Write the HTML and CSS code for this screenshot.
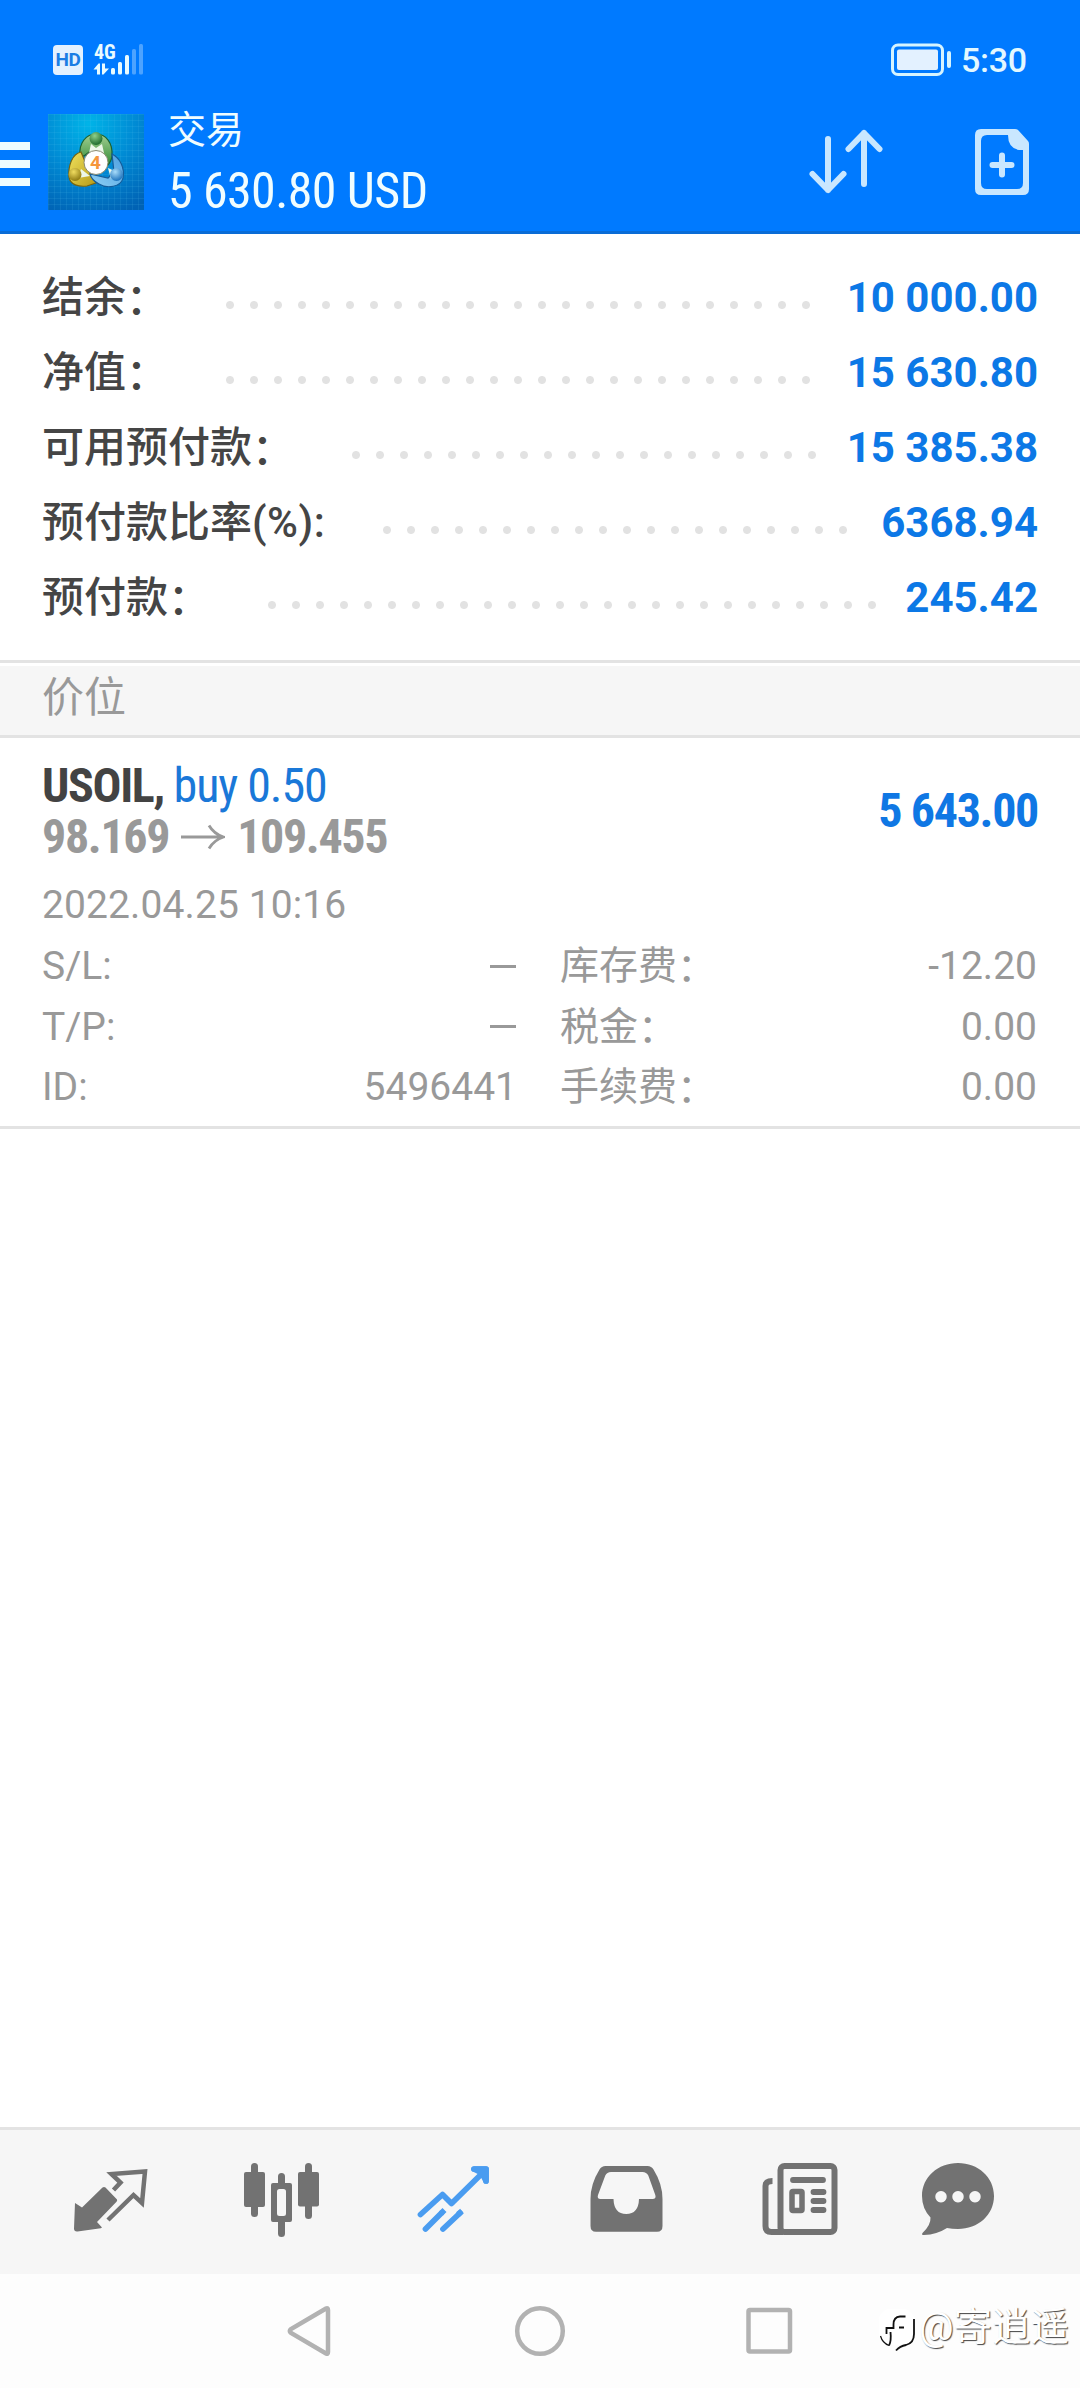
FILE: index.html
```html
<!DOCTYPE html>
<html lang="zh-CN">
<head>
<meta charset="utf-8">
<title>交易</title>
<link rel="stylesheet" href="styles.css">
</head>
<body>
<div class="app">
  <header class="header">
    <div class="status">
      <div class="status-left">
        <span class="hd">HD</span>
        <div class="signal">
          <span class="net cond">4G</span>
          <svg width="52" height="34" viewBox="93 43 52 34">
            <path d="M93.500 69.500l5-6h1.500v11h-3v-5zM102 63.500h3v5h4l-5.500 6H102z" fill="#e9fbff"/>
            <rect x="111" y="68" width="4" height="6.500" rx="1.500" fill="#e9fbff"/>
            <rect x="118" y="62" width="4" height="12.500" rx="1.500" fill="#e9fbff"/>
            <rect x="125" y="55" width="4" height="19.500" rx="1.500" fill="#e9fbff"/>
            <rect x="132" y="49" width="4" height="25.500" rx="1.500" fill="#4da3ff"/>
            <rect x="139" y="44" width="4" height="30.500" rx="1.500" fill="#4da3ff"/>
          </svg>
        </div>
      </div>
      <div class="status-right">
        <svg width="62" height="34" viewBox="891 43 62 34">
          <rect x="893.500" y="45" width="50" height="29.500" rx="5.500" fill="none" stroke="#d6f4ff" stroke-width="3"/>
          <rect x="898" y="49.500" width="41" height="20.500" rx="2" fill="#e3f1ff"/>
          <rect x="948" y="51" width="4" height="17" rx="2" fill="#d6f4ff"/>
        </svg>
        <span class="clock">5:30</span>
      </div>
    </div>
    <div class="toolbar">
      <svg class="menu" width="30" height="44" viewBox="0 0 30 44"><path d="M0 0h30v8H0zM0 18h30v8H0zM0 36h30v8H0z" fill="#eefcff"/></svg>
      <svg class="logo" width="96" height="96" viewBox="0 0 96 96">
        <defs>
          <radialGradient id="bg" cx=".42" cy=".1" r="1"><stop offset="0" stop-color="#00b4e8"/><stop offset=".5" stop-color="#008ad4"/><stop offset="1" stop-color="#0062b4"/></radialGradient>
          <linearGradient id="green" x2="0" y2="1"><stop offset="0" stop-color="#a4cf92"/><stop offset="1" stop-color="#2f8a34"/></linearGradient>
          <linearGradient id="yellow" x2="1" y2="1"><stop offset="0" stop-color="#f2e35e"/><stop offset="1" stop-color="#b59a18"/></linearGradient>
          <linearGradient id="blue" x1="1" y1="0" x2="0" y2="1"><stop offset="0" stop-color="#4c9fe0"/><stop offset="1" stop-color="#8fd0f4"/></linearGradient>
          <radialGradient id="gball" cx=".4" cy=".3" r=".7"><stop offset="0" stop-color="#8fd08b"/><stop offset="1" stop-color="#1f6b2c"/></radialGradient>
          <radialGradient id="yball" cx=".4" cy=".3" r=".7"><stop offset="0" stop-color="#f0dc60"/><stop offset="1" stop-color="#8f7a12"/></radialGradient>
          <radialGradient id="bball" cx=".4" cy=".3" r=".7"><stop offset="0" stop-color="#a8dcfa"/><stop offset="1" stop-color="#1f74bd"/></radialGradient>
          <pattern id="grid" width="6" height="6" patternUnits="userSpaceOnUse"><path d="M0 .5h6M.5 0v6" stroke="#5cc8f0" stroke-opacity=".12" stroke-width="1"/></pattern>
        </defs>
        <rect width="96" height="96" fill="url(#bg)"/>
        <rect width="96" height="96" fill="url(#grid)"/>
        <path d="M32 41C31 29 38 20 48 20s17 9 16 22c-.500 4-3 8-5 10L49 35l-4 0-9 7z" fill="url(#green)" stroke="#1d6230" stroke-width="1.200"/>
        <path d="M33 38c-9 2-13 14-12 25 1 8 10 10 18 9l9-3-7-12z" fill="url(#yellow)" stroke="#776410" stroke-width="1.200"/>
        <path d="M64 40c8 4 13 14 11 24-2 9-16 11-24 6-4-2-8-6-9-10l18 4 6-6z" fill="url(#blue)" stroke="#155d9a" stroke-width="1.200"/>
        <path d="M43 30l5 4 6-4 2 9H41zM33 55l-3 9 12-2zM60 54l9 4-6 7z" fill="#edf7e9"/>
        <circle cx="48" cy="48.500" r="12" fill="#fff" stroke="#8a8a70" stroke-width="1"/>
        <circle cx="48" cy="24.500" r="6.500" fill="url(#gball)"/>
        <circle cx="27" cy="60.500" r="6.500" fill="url(#yball)"/>
        <circle cx="68.500" cy="60.500" r="6.500" fill="url(#bball)"/>
        <text x="47.500" y="55" class="logo-num" text-anchor="middle">4</text>
      </svg>
      <div class="titles">
        <div class="title">交易</div>
        <div class="sum cond">5 630.80 USD</div>
      </div>
      <svg class="sort" width="74" height="66" viewBox="809 129 74 66" fill="none" stroke="#c9e7ff" stroke-width="6" stroke-linecap="round" stroke-linejoin="round">
        <path d="M828 139v51M812.500 174l15.500 16 15.500-16M864 184v-51M848.500 149l15.500-16 15.500 16"/>
      </svg>
      <svg class="add" width="54" height="66" viewBox="975 129 54 66">
        <path fill-rule="evenodd" fill="#c9e7ff" d="M981 129h34q2 0 3.500 1.500L1028 141q1 1 1 3v45q0 6-6 6h-42q-6 0-6-6v-54q0-6 6-6zM987 135q-6 0-6 6v42q0 6 6 6h30q6 0 6-6v-33h-4q-11-2-11-15z"/>
        <path d="M992.500 165h19M1002 155.500v19" stroke="#c9e7ff" stroke-width="6" stroke-linecap="round"/>
      </svg>
    </div>
  </header>

  <section class="account">
    <div class="row"><span class="label">结余<span class="colon">：</span></span><i class="dots"></i><span class="value">10 000.00</span></div>
    <div class="row"><span class="label">净值<span class="colon">：</span></span><i class="dots"></i><span class="value">15 630.80</span></div>
    <div class="row"><span class="label">可用预付款<span class="colon">：</span></span><i class="dots"></i><span class="value">15 385.38</span></div>
    <div class="row"><span class="label">预付款比率<span class="unit">(%):</span></span><i class="dots"></i><span class="value">6368.94</span></div>
    <div class="row"><span class="label">预付款<span class="colon">：</span></span><i class="dots"></i><span class="value">245.42</span></div>
  </section>

  <h2 class="section-title">价位</h2>

  <section class="position">
    <div class="deal">
      <div class="deal-main">
        <div class="deal-line cond"><b class="symbol">USOIL,</b> <span class="side">buy 0.50</span></div>
        <div class="deal-line cond prices"><b>98.169</b><svg class="arrow" width="44" height="26" viewBox="0 0 44 26" fill="none" stroke="#999" stroke-width="2.800"><path d="M0 13h42M28 1.500Q33 10 42.500 13Q33 16 28 24.500"/></svg><b>109.455</b></div>
      </div>
      <b class="profit cond">5 643.00</b>
    </div>
    <div class="date">2022.04.25 10:16</div>
    <div class="details">
      <div class="cell"><span>S/L:</span><i class="dash"></i></div>
      <div class="cell"><span>库存费<span class="colon">：</span></span><span>-12.20</span></div>
      <div class="cell"><span>T/P:</span><i class="dash"></i></div>
      <div class="cell"><span>税金<span class="colon">：</span></span><span>0.00</span></div>
      <div class="cell"><span>ID:</span><span class="ticket">5496441</span></div>
      <div class="cell"><span>手续费<span class="colon">：</span></span><span>0.00</span></div>
    </div>
  </section>

  <nav class="tabs">
    <svg width="180" height="144" viewBox="20 2130 180 144" fill="#727272">
      <path d="M75 2203l7 4.500 20.500-20q1.500-1 3 0l11.500 12q.500 1.200-.500 2.200L97 2222l5 5.500q-1 1-3 1l-21.500 3q-3.500.300-3.500-3z"/>
      <path d="M113.500 2190l7-7.500-9-8.500 33.500-2.500-3 31.500-8.500-8L108 2220" fill="none" stroke="#727272" stroke-width="4.500"/>
    </svg>
    <svg width="180" height="144" viewBox="192 2130 180 144" fill="#727272">
      <rect x="244" y="2172" width="21" height="35" rx="2"/><rect x="251" y="2163" width="7" height="54" rx="3.500"/>
      <rect x="298" y="2172" width="21" height="34.500" rx="2"/><rect x="305" y="2163" width="7" height="56" rx="3.500"/>
      <path d="M278 2184v-7.500a3.500 3.500 0 0 1 7 0v7.500zM278 2221v12.500a3.500 3.500 0 0 0 7 0V2221z"/>
      <path fill-rule="evenodd" d="M273 2183h17q2 0 2 2v35q0 2-2 2h-17q-2 0-2-2v-35q0-2 2-2zM279.500 2189q-2.500 0-2.500 2.500v22q0 2.500 2.500 2.500h4q2.500 0 2.500-2.500v-22q0-2.500-2.500-2.500z"/>
    </svg>
    <svg width="180" height="144" viewBox="364 2130 180 144" fill="none" stroke="#4a9cf0" stroke-width="5.700" stroke-linecap="round" stroke-linejoin="round">
      <path d="M420.500 2214.500l22-20 9 9 32.500-32M474 2169h12v12"/>
      <path d="M474 2169h12v12l-4-8z" fill="#4a9cf0"/>
      <path d="M425.500 2229l16-16M443 2229l17-16"/><path d="M441 2213.500l3.500-3.500M458 2214.500l4-3.500" stroke-linecap="butt"/>
    </svg>
    <svg width="180" height="144" viewBox="536 2130 180 144" fill="#727272">
      <path fill-rule="evenodd" d="M605.500 2166H647.500Q651.500 2166 653.500 2169.500Q662.500 2184 662.500 2199V2226Q662.500 2231.800 657 2231.800H596Q590.500 2231.800 590.500 2226V2199Q590.500 2184 599.500 2169.500Q601.500 2166 605.500 2166ZM611 2172Q607 2172 605.300 2175.500L598 2195Q596.800 2199 600.500 2199H613.500Q614 2214 626.200 2214Q638.500 2214 639 2199H652.500Q656.500 2199 655.300 2195L648.300 2175.500Q646.500 2172 642.500 2172Z"/>
    </svg>
    <svg width="180" height="144" viewBox="708 2130 180 144" fill="none" stroke="#727272">
      <rect x="780.500" y="2166" width="54" height="66" rx="4" stroke-width="6"/>
      <path d="M772.500 2181q-7 0-7 5v40q0 6 6 6h12" stroke-width="6"/>
      <path d="M793 2180h30M813.500 2192h10M813.500 2201h10M813.500 2210h10" stroke-width="5.800" stroke-linecap="round"/>
      <rect x="792" y="2191.500" width="10" height="19" rx="1" stroke-width="5.500"/>
    </svg>
    <svg width="180" height="144" viewBox="868 2130 180 144" fill="#727272">
      <path fill-rule="evenodd" d="M958 2163c20 0 36 14 36 33s-16 33-36 33q-6 0-11-1-10 6.500-23 7-3 0-1.500-2 8.500-8 8-15.500-8.500-9-8.500-21.500c0-19 16-33 36-33zM941 2191a5.700 5.700 0 1 0 .01 0zM958 2191a5.700 5.700 0 1 0 .01 0zM975 2191a5.700 5.700 0 1 0 .01 0z"/>
    </svg>
  </nav>

  <footer class="sysnav">
    <svg width="44" height="52" viewBox="287 2305 44 52"><path d="M326 2308.500q2-1 2 1.500v42q0 2.500-2 1.500l-35-20.500q-2.500-2 0-4z" class="nav-shape"/></svg>
    <svg width="52" height="52" viewBox="514 2305 52 52"><circle cx="540" cy="2331" r="22.800" class="nav-shape"/></svg>
    <svg width="48" height="48" viewBox="745 2307 48 48"><rect x="748.500" y="2310" width="41.500" height="41.500" rx="1.500" class="nav-shape"/></svg>
  </footer>

  <div class="watermark">
    <svg width="42" height="46" viewBox="0 0 42 46">
      <rect x="2" y="2" width="35" height="36" rx="11" fill="#fff"/>
      <g fill="none" stroke="#111" stroke-width="1.800">
        <path d="M37 12V27Q37 36 29 38Q23 39 19 43.500M28.500 9.500H23Q16.500 10 16.500 17.500V21H9.500V27M22 20.500H27M13.500 25Q14.500 34 12 38.500"/>
        <path d="M3.500 29Q5.500 36 12 38.500" stroke-width="1.200"/>
      </g>
    </svg>
    <span>@寄逍遥</span>
  </div>
</div>
</body>
</html>
```
FILE: styles.css
```css
* { box-sizing: border-box; }
body {
  margin: 0;
  background: #fff;
  font-family: Roboto, "Noto Sans CJK SC", sans-serif;
}
svg { display: block; flex: none; }
i { font-style: normal; }
.app {
  position: relative;
  width: 1080px;
  height: 2388px;
  display: flex;
  flex-direction: column;
  overflow: hidden;
}
.cond { font-family: "Roboto Condensed", Roboto, sans-serif; font-stretch: 75%; white-space: pre; }

.header {
  height: 234px;
  background: #007aff;
  border-bottom: 3px solid #0a6cd6;
}
.status {
  height: 108px;
  padding: 43px 53px 0;
  display: flex;
  justify-content: space-between;
}
.status-left { display: flex; gap: 10px; }
.hd {
  width: 30px;
  height: 30px;
  margin-top: 2px;
  border-radius: 4px;
  background: #e3f1ff;
  color: #1b7de4;
  font-size: 19px;
  line-height: 30px;
  font-weight: 700;
  letter-spacing: -.5px;
  text-align: center;
}
.signal { display: grid; }
.signal > * { grid-area: 1 / 1; }
.net { color: #e9fbff; font-size: 20px; line-height: 18px; font-weight: 700; padding-left: 1px; height: 18px; }
.status-right { display: flex; gap: 9px; }
.clock { font-size: 34px; line-height: 34px; font-weight: 500; color: #e3f8ff; width: 66px; letter-spacing: -.3px; }
.toolbar { display: flex; align-items: flex-start; height: 123px; }
.menu { margin-top: 34px; }
.logo { margin: 6px 24px 0 18px; }
.logo-num { font: 700 19px Roboto, sans-serif; fill: #f5963c; }
.titles { width: 641px; color: #f0fdff; }
.title { font-size: 38px; line-height: 44px; }
.sum { font-size: 50px; line-height: 60px; margin-top: 9px; letter-spacing: -.6px; }
.sort { margin-top: 21px; }
.add { margin: 21px 51px 0 92px; }

.account { padding: 26px 42px 25px; border-bottom: 3px solid #e3e3e3; }
.row { display: flex; height: 75px; line-height: 75px; font-size: 42px; font-weight: 500; }
.label { color: #454545; }
.unit { letter-spacing: .5px; }
.colon { display: inline-block; transform: translateY(2px); }
.dots {
  flex: 1;
  margin: 39px 24px 24px 50px;
  background: radial-gradient(circle, #e2e2e2 3.500px, transparent 4.500px) 0 0 / 24px 12px repeat-x;
}
.value { color: #0c78e6; font-weight: 700; }

.section-title {
  margin: 3px 0 0;
  height: 72px;
  padding-left: 42px;
  background: #f6f6f6;
  border-bottom: 3px solid #e3e3e3;
  font-size: 42px;
  line-height: 63px;
  font-weight: 400;
  color: #999;
}

.position {
  padding: 22px 42px 8px;
  border-bottom: 3px solid #e3e3e3;
  color: #999;
}
.deal { display: flex; justify-content: space-between; height: 102px; font-size: 48px; letter-spacing: -1.350px; }
.deal-line { height: 51px; line-height: 51px; }
.symbol { color: #434343; }
.side { color: #1a78d8; letter-spacing: -1.050px; }
.prices { display: flex; align-items: center; gap: 12px; }
.profit { line-height: 102px; color: #0f77e4; }
.date { margin-top: 12px; font-size: 39px; line-height: 62px; letter-spacing: .1px; }
.details { display: grid; grid-template-columns: 475px 477px; column-gap: 43px; font-size: 39px; }
.cell { display: flex; justify-content: space-between; align-items: center; height: 60.500px; line-height: 60px; }
.dash { width: 26px; height: 3px; margin-right: 1px; background: #999; }

.tabs {
  margin-top: auto;
  height: 147px;
  display: flex;
  background: #f6f6f6;
  border-top: 3px solid #e3e3e3;
  padding-left: 20px;
}
.tabs svg { margin-right: -8px; }
.tabs svg:nth-child(5) { margin-right: -20px; }
.sysnav {
  height: 114px;
  background: #fdfdfd;
  display: flex;
  align-items: center;
  padding-left: 287px;
}
.sysnav svg:nth-child(2) { margin: 0 179px 0 183px; }
.nav-shape { fill: none; stroke: #b2b2b2; stroke-width: 4.500px; }

.watermark {
  position: absolute;
  left: 877px;
  top: 2307px;
  display: flex;
  color: #fff;
  font-size: 38.500px;
  line-height: 40px;
  white-space: nowrap;
  text-shadow: 1px 1px 1px #444;
}
```
